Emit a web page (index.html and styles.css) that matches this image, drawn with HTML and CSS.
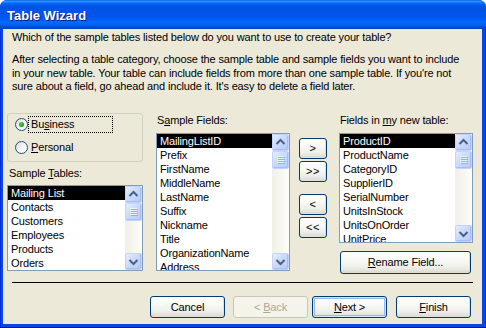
FILE: index.html
```html
<!DOCTYPE html>
<html>
<head>
<meta charset="utf-8">
<title>Table Wizard</title>
<link rel="stylesheet" href="styles.css">
</head>
<body>
<div class="window">
  <div class="titlebar"><span class="title">Table Wizard</span></div>
  <div class="client">
    <p class="question">Which of the sample tables listed below do you want to use to create your table?</p>
    <p class="desc">After selecting a table category, choose the sample table and sample fields you want to include<br>in your new table. Your table can include fields from more than one sample table. If you're not<br>sure about a field, go ahead and include it. It's easy to delete a field later.</p>
    <div class="main">
      <div class="col col-left">
        <div class="group">
          <div class="radio"><span class="dot checked"></span><span class="rlabel focus">Bu<u>s</u>iness</span></div>
          <div class="radio"><span class="dot"></span><span class="rlabel"><u>P</u>ersonal</span></div>
        </div>
        <div class="label label-tables">Sample <u>T</u>ables:</div>
        <div class="list list-tables">
          <ul class="items">
            <li class="sel">Mailing List</li>
            <li>Contacts</li>
            <li>Customers</li>
            <li>Employees</li>
            <li>Products</li>
            <li>Orders</li>
          </ul>
          <div class="sb">
            <div class="sbtn"><svg width="15" height="15" viewBox="0 0 15 15"><polyline points="3.5,9 7.5,5 11.5,9" fill="none" stroke="#4D6185" stroke-width="2"/></svg></div>
            <div class="thumb"><svg width="15" height="15" viewBox="0 0 15 15"><path d="M4 4.5h7M4 6.5h7M4 8.5h7M4 10.5h7" stroke="#EEF4FE" stroke-width="1"/><path d="M5 5.5h7M5 7.5h7M5 9.5h7M5 11.5h7" stroke="#8CB0F8" stroke-width="1"/></svg></div>
            <div class="track"></div>
            <div class="sbtn"><svg width="15" height="15" viewBox="0 0 15 15"><polyline points="3.5,6 7.5,10 11.5,6" fill="none" stroke="#4D6185" stroke-width="2"/></svg></div>
          </div>
        </div>
      </div>
      <div class="col col-mid">
        <div class="label">S<u>a</u>mple Fields:</div>
        <div class="list list-fields">
          <ul class="items">
            <li class="sel">MailingListID</li>
            <li>Prefix</li>
            <li>FirstName</li>
            <li>MiddleName</li>
            <li>LastName</li>
            <li>Suffix</li>
            <li>Nickname</li>
            <li>Title</li>
            <li>OrganizationName</li>
            <li>Address</li>
          </ul>
          <div class="sb">
            <div class="sbtn"><svg width="15" height="15" viewBox="0 0 15 15"><polyline points="3.5,9 7.5,5 11.5,9" fill="none" stroke="#4D6185" stroke-width="2"/></svg></div>
            <div class="thumb"><svg width="15" height="15" viewBox="0 0 15 15"><path d="M4 4.5h7M4 6.5h7M4 8.5h7M4 10.5h7" stroke="#EEF4FE" stroke-width="1"/><path d="M5 5.5h7M5 7.5h7M5 9.5h7M5 11.5h7" stroke="#8CB0F8" stroke-width="1"/></svg></div>
            <div class="track"></div>
            <div class="sbtn"><svg width="15" height="15" viewBox="0 0 15 15"><polyline points="3.5,6 7.5,10 11.5,6" fill="none" stroke="#4D6185" stroke-width="2"/></svg></div>
          </div>
        </div>
      </div>
      <div class="col col-btns">
        <div class="btn move">&gt;</div>
        <div class="btn move">&gt;&gt;</div>
        <div class="btn move move-gap">&lt;</div>
        <div class="btn move">&lt;&lt;</div>
      </div>
      <div class="col col-right">
        <div class="label">Fields in <u>m</u>y new table:</div>
        <div class="list list-new">
          <ul class="items">
            <li class="sel">ProductID</li>
            <li>ProductName</li>
            <li>CategoryID</li>
            <li>SupplierID</li>
            <li>SerialNumber</li>
            <li>UnitsInStock</li>
            <li>UnitsOnOrder</li>
            <li>UnitPrice</li>
          </ul>
          <div class="sb">
            <div class="sbtn"><svg width="15" height="15" viewBox="0 0 15 15"><polyline points="3.5,9 7.5,5 11.5,9" fill="none" stroke="#4D6185" stroke-width="2"/></svg></div>
            <div class="thumb"><svg width="15" height="15" viewBox="0 0 15 15"><path d="M4 4.5h7M4 6.5h7M4 8.5h7M4 10.5h7" stroke="#EEF4FE" stroke-width="1"/><path d="M5 5.5h7M5 7.5h7M5 9.5h7M5 11.5h7" stroke="#8CB0F8" stroke-width="1"/></svg></div>
            <div class="track"></div>
            <div class="sbtn"><svg width="15" height="15" viewBox="0 0 15 15"><polyline points="3.5,6 7.5,10 11.5,6" fill="none" stroke="#4D6185" stroke-width="2"/></svg></div>
          </div>
        </div>
        <div class="btn rename"><u>R</u>ename Field...</div>
      </div>
    </div>
    <div class="sep"></div>
    <div class="footer">
      <div class="btn fbtn">Cancel</div>
      <div class="btn fbtn disabled back">&lt;&nbsp;<u>B</u>ack</div>
      <div class="btn fbtn default next"><u>N</u>ext&nbsp;&gt;</div>
      <div class="btn fbtn finish"><u>F</u>inish</div>
    </div>
  </div>
</div>
</body>
</html>
```
FILE: styles.css
```css
* { box-sizing: border-box; }
html, body { margin: 0; padding: 0; }
body {
  width: 486px;
  height: 328px;
  overflow: hidden;
  background: #ffffff;
  font-family: "Liberation Sans", Arial, sans-serif;
  font-size: 11px;
  letter-spacing: -0.15px;
  color: #000;
}
u { text-decoration: underline; text-underline-offset: 1px; }

.window {
  width: 486px;
  height: 328px;
  display: flex;
  flex-direction: column;
  border-radius: 7px 7px 0 0;
  overflow: hidden;
  background: linear-gradient(to right, #0019CF 0, #0846E6 1px, #0846E6 calc(100% - 1px), #001EA0 100%);
  box-shadow: inset 0 -1px 0 #001690;
}
.titlebar {
  flex: none;
  height: 29px;
  display: flex;
  align-items: center;
  padding-left: 7px;
  background: linear-gradient(to bottom,
    #0058EE 0%, #3593FF 4%, #288EFF 6%, #127DFF 8%, #036FFC 10%,
    #0262EE 14%, #0057E5 20%, #0054E3 24%, #0055EB 56%, #005BF5 66%,
    #026AFE 76%, #0062EF 86%, #0052D6 92%, #0046C8 96%, #0040C0 100%);
}
.title {
  color: #fff;
  font-weight: bold;
  font-size: 13px;
  letter-spacing: 0;
  text-shadow: 1px 1px 0 #0A1883;
  padding-top: 1px;
}
.client {
  flex: 1;
  margin: 0 4px 4px 3px;
  background: #ECE9D8;
  display: flex;
  flex-direction: column;
}
.question {
  margin: 0;
  padding: 2px 0 0 9px;
  line-height: 13px;
  white-space: nowrap;
}
.desc {
  margin: 9px 0 0 9px;
  line-height: 13.5px;
  white-space: nowrap;
}

.main {
  display: flex;
  margin-top: 19px;
}
.col { display: flex; flex-direction: column; }
.col-left { margin-left: 4px; width: 136px; }
.col-mid { margin-left: 13px; width: 134px; }
.col-btns { margin-left: 9px; width: 28px; padding-top: 25px; }
.col-right { margin-left: 12px; width: 134px; }

.group {
  height: 49px;
  border: 1px solid #D0D0BF;
  border-radius: 3px;
  padding: 2px 0 0 7px;
  display: flex;
  flex-direction: column;
  gap: 6px;
}
.radio {
  height: 17px;
  display: flex;
  align-items: center;
}
.dot {
  width: 13px;
  height: 13px;
  border-radius: 50%;
  border: 1px solid #1C5180;
  background: linear-gradient(135deg, #DCD9CF 0%, #F4F3EE 50%, #FFFFFF 100%);
  flex: none;
  position: relative;
}
.dot.checked::after {
  content: "";
  position: absolute;
  left: 3px;
  top: 3px;
  width: 5px;
  height: 5px;
  border-radius: 50%;
  background: radial-gradient(circle at 40% 40%, #55D551 0%, #21A121 60%, #1A8F1A 100%);
}
.rlabel {
  height: 17px;
  line-height: 15px;
  padding: 0 2px;
  border: 1px solid transparent;
}
.rlabel.focus {
  width: 85px;
  border: 1px dotted #000;
}

.label {
  line-height: 14px;
  height: 14px;
  margin-left: 1px;
  white-space: nowrap;
}
.label-tables { margin-top: 4px; margin-left: 2px; }

.list {
  border: 1px solid #7F9DB9;
  background: #fff;
  display: flex;
  overflow: hidden;
}
.list-tables { height: 86px; margin-top: 5px; }
.list-fields { height: 138px; margin-top: 6px; }
.list-new { height: 110px; margin-top: 6px; }

.items {
  flex: 1;
  list-style: none;
  margin: 0;
  padding: 0;
  overflow: hidden;
  min-width: 0;
}
.items li {
  height: 14px;
  line-height: 14px;
  padding-left: 3px;
  white-space: nowrap;
}
.items li.sel { background: #000; color: #fff; }

.sb {
  width: 17px;
  flex: none;
  display: flex;
  flex-direction: column;
  background: linear-gradient(to right, #F0EFE8, #FDFDFA);
}
.sbtn, .thumb {
  height: 17px;
  flex: none;
  border: 1px solid #C3D3FD;
  border-radius: 2px;
  background: linear-gradient(135deg, #E6EEFC 0%, #C9DAFC 45%, #B7CBF8 100%);
  display: flex;
  align-items: center;
  justify-content: center;
  box-shadow: inset -1px -1px 0 #A8BEF2;
}
.thumb { height: 18px; }
.track { flex: 1; }

.btn {
  border: 1px solid #003C74;
  border-radius: 3px;
  background: linear-gradient(to bottom, #FFFFFF 0%, #FAFAF8 30%, #F0F0EA 70%, #E3E1D8 90%, #D6D0C5 100%);
  display: flex;
  align-items: center;
  justify-content: center;
  white-space: nowrap;
  box-shadow: inset -1px -1px 0 #E2DED5;
}
.move { height: 21px; margin-bottom: 2px; letter-spacing: 0.5px; }
.move-gap { margin-top: 10px; }
.rename { height: 23px; margin-top: 8px; margin-left: 1px; width: 131px; }

.sep {
  height: 1px;
  background: #000;
  margin: 8px 0 0 9px;
  width: 461px;
}
.footer {
  display: flex;
  margin-top: 13px;
  padding-left: 147px;
}
.fbtn { width: 75px; height: 22px; }
.back { margin-left: 8px; }
.next { margin-left: 4px; }
.finish { margin-left: 9px; }
.disabled {
  border-color: #C9C7BA;
  background: #F5F4EA;
  color: #ACA899;
  box-shadow: none;
}
.default {
  box-shadow: inset 0 0 0 1px #CEE7FF, inset 0 0 0 2px #98B8F4;
}
```
